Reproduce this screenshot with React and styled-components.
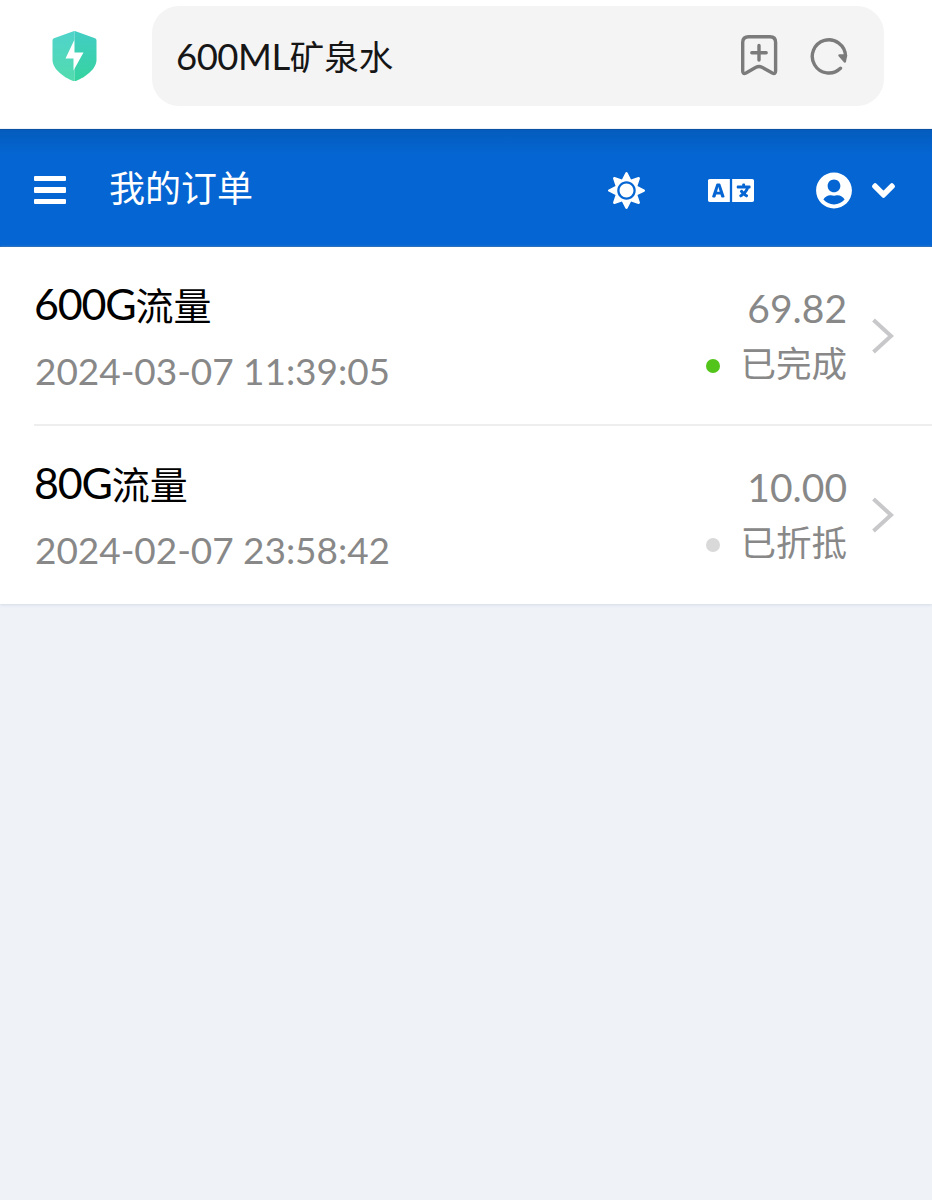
import React from 'react'
import styled, { createGlobalStyle } from 'styled-components'
import { FaSun, FaLanguage, FaUserCircle, FaChevronDown } from 'react-icons/fa'

const GlobalStyle = createGlobalStyle`
* {
  box-sizing: border-box;
}
body {
  margin: 0;
  background-color: #eff3f8;
  font-family: Lato, "Noto Sans CJK SC", sans-serif;
}
`
const Page = styled.div`
display: flex;
flex-direction: column;
min-height: 1200px;
`
const BrowserBar = styled.div`
display: flex;
align-items: flex-start;
height: 128px;
padding: 6px 48px 0 52px;
background-color: white;
`
const Shield = styled.svg`
width: 45px;
height: 52px;
margin-top: 24px;
flex-shrink: 0;
`
const AddressBox = styled.div`
display: flex;
align-items: center;
flex: 1;
height: 100px;
margin-left: 55px;
padding: 0 35px 2px 24px;
border-radius: 27px;
background-color: #f4f4f4;
`
const Address = styled.div`
flex: 1;
padding-top: 2px;
font-size: 36.5px;
line-height: 60px;
letter-spacing: -0.5px;
color: #161616;
`
const Cjk = styled.span`
font-family: "Noto Sans CJK SC", sans-serif;
font-size: ${props => props.$size}px;
letter-spacing: 0;
line-height: 0;
`
const BarIcon = styled.svg`
width: 40px;
height: 44px;
margin-left: 30px;
fill: none;
stroke: #7b7b7b;
stroke-width: 3.4;
stroke-linecap: round;
stroke-linejoin: round;
`
const Header = styled.header`
display: flex;
align-items: center;
height: 118px;
margin-top: 0.6px;
padding: 5px 37px 0 34px;
color: white;
background: linear-gradient(#045cbd, #0565d2 24px);
border-top: 1px solid #0a50a5;
border-bottom: 1px solid #0c5cb4;
`
const Menu = styled.div`
display: flex;
flex-direction: column;
gap: 6px;
width: 32px;
`
const MenuLine = styled.div`
height: 5.4px;
border-radius: 1px;
background-color: white;
`
const Title = styled.div`
flex: 1;
margin: -8px 0 0 43px;
font-family: "Noto Sans CJK SC", sans-serif;
font-size: 36px;
line-height: 50px;
`
const HeaderIcon = styled.div`
display: flex;
margin-left: ${props => props.$gap}px;
svg {
  width: ${props => props.$width}px;
  height: ${props => props.$height}px;
  overflow: visible;
  stroke-width: ${props => props.$bold || 0}px;
  stroke-linejoin: round;
}
`
const Orders = styled.div`
background-color: white;
box-shadow: 0 1px 3px #d3dae6;
`
const Order = styled.div`
display: flex;
height: ${props => props.$last ? 178 : 179}px;
margin-left: 34px;
padding-right: 38px;
border-bottom: ${props => props.$last ? '0' : '2px solid #eeeeee'};
`
const Info = styled.div`
flex: 1;
padding-top: 27px;
`
const Name = styled.div`
font-size: 43px;
line-height: 60px;
letter-spacing: -1.2px;
color: black;
`
const Time = styled.div`
margin: 12px 0 0 1px;
font-size: 37px;
line-height: 50px;
letter-spacing: -0.05px;
color: #888888;
`
const Summary = styled.div`
display: flex;
flex-direction: column;
align-items: flex-end;
padding-top: 34px;
color: #888888;
`
const Price = styled.div`
font-size: 39px;
line-height: 54px;
`
const Status = styled.div`
display: flex;
align-items: center;
gap: 20px;
height: 50px;
margin-top: 2px;
font-family: "Noto Sans CJK SC", sans-serif;
font-size: 35.5px;
line-height: 50px;
`
const Dot = styled.div`
width: 14px;
height: 14px;
margin-top: 8px;
border-radius: 50%;
background-color: ${props => props.$color};
`
const Arrow = styled.svg`
width: 22px;
height: 36px;
margin: 71px 0 0 25px;
fill: none;
stroke: #c8c8cb;
stroke-width: 4;
`

const orders = [
  { size: '600G', time: '2024-03-07 11:39:05', price: '69.82', status: '已完成', color: '#52c41a' },
  { size: '80G', time: '2024-02-07 23:58:42', price: '10.00', status: '已折抵', color: '#d9d9d9' },
]

export default function App() {
  return (
    <>
    <GlobalStyle/>
    <Page>
        <BrowserBar>
            <Shield viewBox="0 0 45 52">
              <defs>
                <linearGradient id="left" x1="0" y1="0" x2="0" y2="1">
                  <stop offset="0" stopColor="#4fd3cb"/>
                  <stop offset="1" stopColor="#52dcae"/>
                </linearGradient>
                <linearGradient id="right" x1="0" y1="0" x2="0" y2="1">
                  <stop offset="0" stopColor="#43cdc4"/>
                  <stop offset="1" stopColor="#35d39f"/>
                </linearGradient>
              </defs>
              <path d="M22.5 1Q21.5 1 20 1.7L2 8.2Q.5 8.8 .5 10.5V30C.5 39 12 47.5 20.5 50.7Q21.5 51 22.5 51Z" fill="url(#left)"/>
              <path d="M22.5 1Q23.5 1 25 1.7L43 8.2Q44.5 8.8 44.5 10.5V30C44.5 39 33 47.5 24.5 50.7Q23.5 51 22.5 51Z" fill="url(#right)"/>
              <path d="M22.3 10L13.5 28.5H21.5V40.5L31.5 22.5H22.3Z" fill="white"/>
            </Shield>
            <AddressBox>
                <Address>600ML<Cjk $size={34.5}>矿泉水</Cjk></Address>
                <BarIcon viewBox="0 0 40 44">
                  <path d="M9.7 3.7H31Q36.6 3.7 36.6 9.300V38Q36.6 41.5 33.300 40L23 34.3Q20 32.800 17 34.3L7 40Q3.7 41.5 3.7 38V9.3Q3.7 3.7 9.7 3.7ZM20 12.5V27M12.800 19.7H27.200"/>
                </BarIcon>
                <BarIcon viewBox="0 0 40 44">
                  <path d="M31.5 35.300A16.6 16.6 0 1 1 36.5 23"/>
                  <path d="M30.500 22.5H37L35.8 28.500Z" fill="#7b7b7b" strokeWidth="2.400"/>
                </BarIcon>
            </AddressBox>
        </BrowserBar>
        <Header>
            <Menu>
                <MenuLine/>
                <MenuLine/>
                <MenuLine/>
            </Menu>
            <Title>我的订单</Title>
            <HeaderIcon $width={37} $height={37}><FaSun/></HeaderIcon>
            <HeaderIcon $gap={63} $width={46} $height={37}><FaLanguage/></HeaderIcon>
            <HeaderIcon $gap={62} $width={36} $height={37}><FaUserCircle/></HeaderIcon>
            <HeaderIcon $gap={20} $width={23} $height={25} $bold={34}><FaChevronDown/></HeaderIcon>
        </Header>
        <Orders>
          {orders.map((order, i) => (
            <Order key={order.time} $last={i === orders.length - 1}>
                <Info>
                    <Name>{order.size}<Cjk $size={38}>流量</Cjk></Name>
                    <Time>{order.time}</Time>
                </Info>
                <Summary>
                    <Price>{order.price}</Price>
                    <Status><Dot $color={order.color}/>{order.status}</Status>
                </Summary>
                <Arrow viewBox="0 0 22 36">
                  <path d="M1.5 2L19 18L1.5 34"/>
                </Arrow>
            </Order>
          ))}
        </Orders>
    </Page>
    </>
  )
}
